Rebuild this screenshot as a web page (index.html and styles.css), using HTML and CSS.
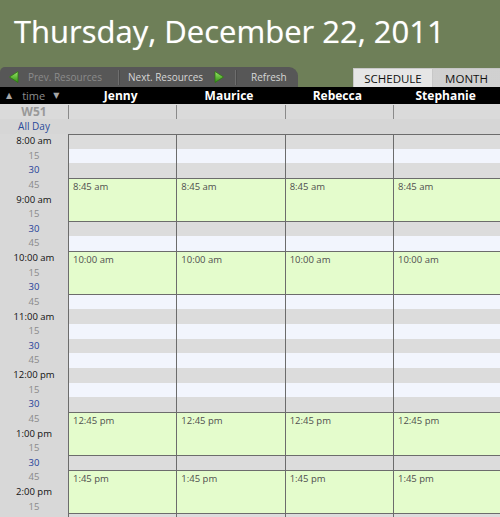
FILE: index.html
```html
<!DOCTYPE html>
<html>
<head>
<meta charset="utf-8">
<link rel="stylesheet" href="styles.css">
</head>
<body>
<div class="page">
  <header class="top">
    <h1 class="title">Thursday, December 22, 2011</h1>
  </header>
  <div class="toolbar">
    <div class="navtab">
      <span class="navbtn disabled">
        <svg class="tri" width="10" height="12" viewBox="0 0 10 12"><defs><linearGradient id="gl" x1="0" y1="0" x2="0" y2="1"><stop offset="0" stop-color="#9be86a"/><stop offset="1" stop-color="#2f8f12"/></linearGradient></defs><polygon points="9,0.5 9,11.5 0.5,6" fill="url(#gl)" stroke="#2e7a12" stroke-width="0.8"/></svg>
        <span class="lbl">Prev. Resources</span>
      </span>
      <span class="sep"></span>
      <span class="navbtn">
        <span class="lbl">Next. Resources</span>
        <svg class="tri" width="10" height="12" viewBox="0 0 10 12"><defs><linearGradient id="gr" x1="0" y1="0" x2="0" y2="1"><stop offset="0" stop-color="#9be86a"/><stop offset="1" stop-color="#2f8f12"/></linearGradient></defs><polygon points="1,0.5 1,11.5 9.5,6" fill="url(#gr)" stroke="#2e7a12" stroke-width="0.8"/></svg>
      </span>
      <span class="sep"></span>
      <span class="navbtn refresh"><span class="lbl">Refresh</span></span>
    </div>
    <div class="viewtabs">
      <span class="vtab active">SCHEDULE</span>
      <span class="vtab month">MONTH</span>
    </div>
  </div>
  <div class="colhead">
    <div class="timehead"><span class="arr">&#9650;</span><span class="tword">time</span><span class="arr">&#9660;</span></div>
    <div class="name">Jenny</div>
    <div class="name">Maurice</div>
    <div class="name">Rebecca</div>
    <div class="name">Stephanie</div>
  </div>
  <div class="week">
    <div class="wlabel">W51</div>
    <div class="wcell"></div>
    <div class="wcell"></div>
    <div class="wcell"></div>
    <div class="wcell"></div>
  </div>
  <div class="allday">
    <div class="alabel">All Day</div>
  </div>
  <div class="grid">
    <div class="col c1"></div>
    <div class="col c2"></div>
    <div class="col c3"></div>
    <div class="col c4"></div>

    <div class="tl hr">8:00 am</div>
    <div class="tl q">15</div>
    <div class="tl h">30</div>
    <div class="tl q">45</div>
    <div class="tl hr">9:00 am</div>
    <div class="tl q">15</div>
    <div class="tl h">30</div>
    <div class="tl q">45</div>
    <div class="tl hr">10:00 am</div>
    <div class="tl q">15</div>
    <div class="tl h">30</div>
    <div class="tl q">45</div>
    <div class="tl hr">11:00 am</div>
    <div class="tl q">15</div>
    <div class="tl h">30</div>
    <div class="tl q">45</div>
    <div class="tl hr">12:00 pm</div>
    <div class="tl q">15</div>
    <div class="tl h">30</div>
    <div class="tl q">45</div>
    <div class="tl hr">1:00 pm</div>
    <div class="tl q">15</div>
    <div class="tl h">30</div>
    <div class="tl q">45</div>
    <div class="tl hr">2:00 pm</div>
    <div class="tl q">15</div>

    <div class="ev c1 e1">8:45 am</div>
    <div class="ev c2 e1">8:45 am</div>
    <div class="ev c3 e1">8:45 am</div>
    <div class="ev c4 e1">8:45 am</div>
    <div class="ev c1 e2">10:00 am</div>
    <div class="ev c2 e2">10:00 am</div>
    <div class="ev c3 e2">10:00 am</div>
    <div class="ev c4 e2">10:00 am</div>
    <div class="ev c1 e3">12:45 pm</div>
    <div class="ev c2 e3">12:45 pm</div>
    <div class="ev c3 e3">12:45 pm</div>
    <div class="ev c4 e3">12:45 pm</div>
    <div class="ev c1 e4">1:45 pm</div>
    <div class="ev c2 e4">1:45 pm</div>
    <div class="ev c3 e4">1:45 pm</div>
    <div class="ev c4 e4">1:45 pm</div>
  </div>
</div>
</body>
</html>
```
FILE: styles.css
```css
html, body {
  margin: 0;
  padding: 0;
  overflow: hidden;
  background: #6e7f58;
}
.page {
  width: 502px;
  font-family: "Open Sans", "DejaVu Sans", sans-serif;
}
.top {
  height: 67px;
  padding-left: 14px;
  box-sizing: border-box;
}
.title {
  margin: 0;
  padding-top: 10px;
  font-family: "Open Sans", "DejaVu Sans", sans-serif;
  font-weight: normal;
  font-size: 31px;
  line-height: 42px;
  color: #ffffff;
  text-shadow: 0 0 1px rgba(255,255,255,0.5);
}
.toolbar {
  height: 20px;
  display: flex;
  justify-content: space-between;
  align-items: flex-end;
}
.navtab {
  width: 298px;
  height: 20px;
  background: #575757;
  border-radius: 5px 9px 0 0;
  display: flex;
  align-items: center;
  font-size: 10px;
  color: #d6d6d6;
}
.navbtn {
  display: flex;
  align-items: center;
  height: 20px;
}
.navbtn:first-child {
  padding-left: 9px;
  width: 109px;
}
.navbtn:first-child .lbl {
  margin-left: 9px;
}
.navbtn.disabled {
  color: #8b8b8b;
}
.navbtn:nth-child(3) {
  padding-left: 8px;
  width: 107px;
}
.navbtn:nth-child(3) .tri {
  margin-left: 11px;
}
.refresh {
  padding-left: 14px;
}
.sep {
  width: 1px;
  height: 15px;
  background: #6e6e6e;
  border-right: 1px solid #4a4a4a;
}
.tri {
  display: block;
}
.viewtabs {
  display: flex;
  height: 19px;
}
.vtab {
  display: flex;
  align-items: center;
  justify-content: center;
  font-size: 11.5px;
  color: #111;
  box-sizing: border-box;
  height: 19px;
}
.vtab.active {
  width: 80px;
  background: #e6e6e6;
  border: 1px solid #c8c8c8;
  border-bottom: none;
}
.vtab.month {
  width: 69px;
  padding-right: 2px;
  background-color: #d6d6d6;
  background-image: radial-gradient(circle, #cacaca 0.6px, transparent 0.8px);
  background-size: 2px 2px;
  border-top: 1px solid #c6c6c6;
}
.colhead {
  display: flex;
  height: 17px;
  background: #000;
  align-items: center;
}
.timehead {
  width: 68px;
  display: flex;
  align-items: center;
  padding-left: 6px;
  box-sizing: border-box;
  color: #8c8c8c;
  font-size: 11px;
}
.arr {
  font-size: 8px;
  color: #a6a6a6;
  font-family: "DejaVu Sans", sans-serif;
}
.tword {
  margin: 0 8px 0 10px;
  line-height: 17px;
}
.name {
  width: 108.33px;
  text-align: center;
  color: #fff;
  font-weight: bold;
  font-size: 12px;
  line-height: 17px;
  padding-right: 3px;
  box-sizing: border-box;
}
.week {
  display: flex;
  height: 15px;
  background: #dadada;
}
.wlabel {
  width: 68px;
  text-align: center;
  font-weight: bold;
  font-size: 12px;
  line-height: 15px;
  color: #999;
}
.wcell {
  width: 108.33px;
  border-left: 1px solid #8a8a8a;
  box-sizing: border-box;
  height: 14px;
  margin-top: 1px;
}
.allday {
  height: 15px;
  background: #d6d6d6;
  display: flex;
}
.alabel {
  width: 68px;
  text-align: center;
  font-size: 10px;
  line-height: 15px;
  color: #2a4a9a;
}
.grid {
  display: grid;
  grid-template-columns: 68px repeat(4, 108.33px);
  grid-template-rows: repeat(28, 14.625px);
  background: #d8d8d8;
}
.col {
  grid-row: 1 / -1;
  border-left: 1px solid #6c6c6c;
  border-top: 1px solid #6c6c6c;
  box-sizing: border-box;
  background-origin: border-box;
  background-image: repeating-linear-gradient(to bottom, #dcdcdc 0, #dcdcdc 14.625px, #f2f5fd 14.625px, #f2f5fd 29.25px);
}
.c1 { grid-column: 2; }
.c2 { grid-column: 3; }
.c3 { grid-column: 4; }
.c4 { grid-column: 5; }
.tl {
  grid-column: 1;
  text-align: center;
  font-size: 9.5px;
  line-height: 14.625px;
}
.tl.hr { color: #111; }
.tl.q { color: #8a8a8a; }
.tl.h { color: #1f3f98; }
.ev {
  background: #e4fccc;
  border: 1px solid #6c6c6c;
  border-right: none;
  box-sizing: border-box;
  padding: 2px 0 0 4px;
  font-size: 9.5px;
  line-height: 12px;
  color: #4f4f4f;
}
.e1 { grid-row: 4 / span 3; }
.e2 { grid-row: 9 / span 3; }
.e3 { grid-row: 20 / span 3; }
.e4 { grid-row: 24 / span 3; }
```
